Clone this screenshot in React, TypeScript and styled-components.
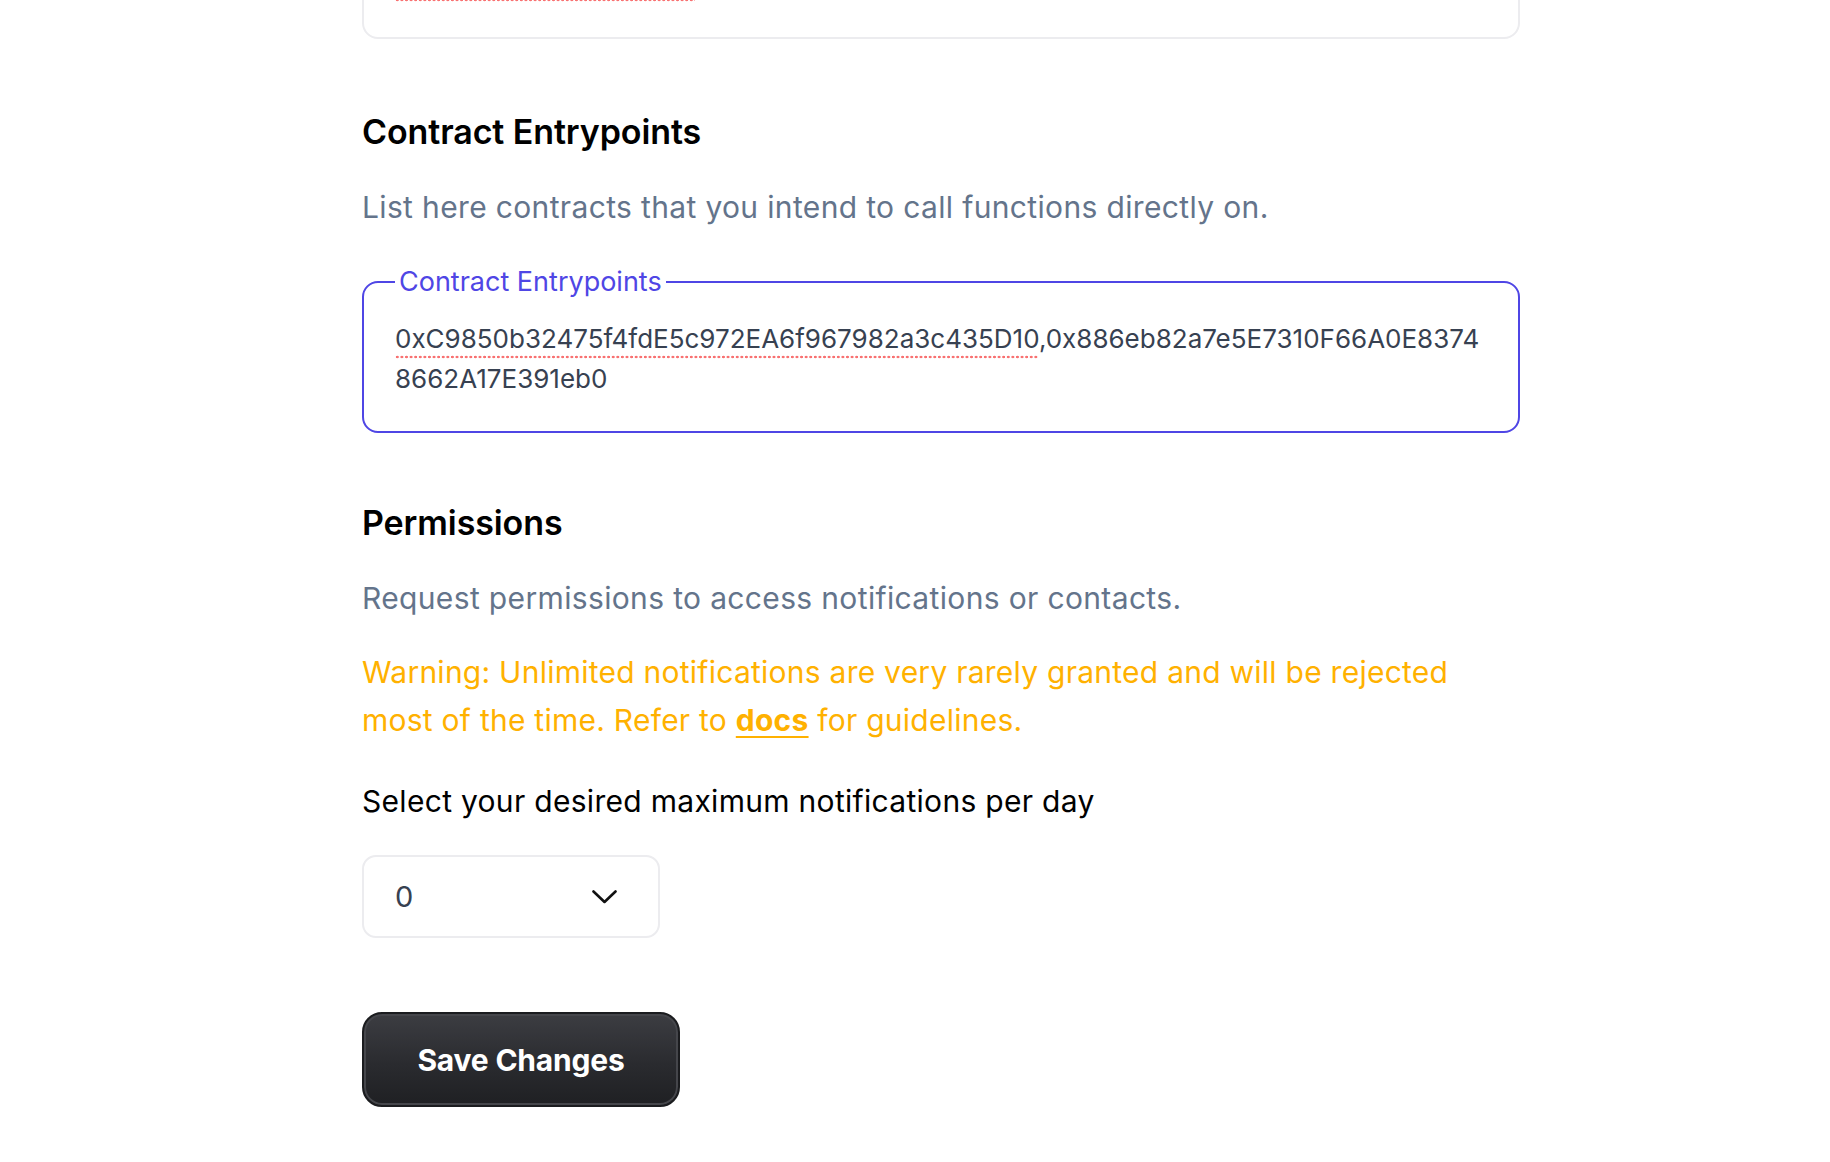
import React from "react";
import styled, { createGlobalStyle } from "styled-components";

const Global = createGlobalStyle`
  html, body { margin: 0; padding: 0; background: #ffffff; }
  body { font-family: Inter, "Noto Sans", "Liberation Sans", sans-serif; overflow: hidden; }
  * { box-sizing: border-box; }
`;

const Page = styled.main`
  width: 1830px;
  height: 1162px;
  overflow: hidden;
  padding: 0 0 0 362px;
`;

const Column = styled.div`
  width: 1158px;
  display: flex;
  flex-direction: column;
  align-items: flex-start;
`;

const PrevBox = styled.div`
  width: 100%;
  margin-top: -61px;
  height: 100px;
  border: 2px solid #ececef;
  border-radius: 16px;
  padding: 0 31px;
`;

const dots = `
  background-image: radial-gradient(circle, #f87171 1.1px, transparent 1.6px);
  background-size: 4.6px 4px;
  background-repeat: repeat-x;
`;

const SpellMark = styled.span`
  display: block;
  margin-top: 57px;
  width: 300px;
  height: 4px;
  ${dots}
  background-position: 0 0;
`;

const Misspelled = styled.span`
  ${dots}
  background-position: 0 calc(100% - 1px);
  padding-bottom: 6px;
`;

const SectionTitle = styled.h2<{ $top: number }>`
  margin: ${(p) => p.$top}px 0 0;
  font-size: 34px;
  line-height: 40px;
  font-weight: 600;
  letter-spacing: -0.1px;
  color: #000;
`;

const Description = styled.p`
  margin: 35px 0 0;
  font-size: 30px;
  line-height: 40px;
  letter-spacing: 0.35px;
  color: #64748b;
`;

const Field = styled.fieldset`
  margin: 40px 0 0;
  width: 100%;
  border: 2px solid #4f46e5;
  border-radius: 16px;
  padding: 22px 28px 32px 31px;
  min-width: 0;
`;

const Legend = styled.legend`
  padding: 0 4px;
  font-size: 27px;
  line-height: 30px;
  color: #4f46e5;
`;

const FieldValue = styled.div`
  font-size: 26px;
  line-height: 40px;
  color: #374151;
  word-break: break-all;
`;

const Warning = styled.p`
  margin: 30px 0 0;
  font-size: 30px;
  line-height: 48px;
  letter-spacing: 0.25px;
  color: #ffb100;
  width: 1120px;
`;

const DocsLink = styled.a`
  color: #ffb100;
  font-weight: 700;
  text-decoration: underline;
  text-decoration-thickness: 2px;
  text-underline-offset: 5px;
`;

const SelectLabel = styled.p`
  margin: 37px 0 0;
  font-size: 30px;
  line-height: 40px;
  letter-spacing: 0.3px;
  color: #000;
`;

const SelectBox = styled.div`
  margin-top: 34px;
  width: 298px;
  height: 83px;
  border: 2px solid #ececef;
  border-radius: 14px;
  display: flex;
  align-items: center;
  justify-content: space-between;
  padding: 0 41px 0 31px;
  font-size: 29px;
  color: #374151;
`;

const SaveButton = styled.button`
  margin-top: 74px;
  width: 318px;
  height: 95px;
  border-radius: 20px;
  border: 2px solid #1b1c1f;
  background: linear-gradient(180deg, #3c3d42 0%, #2a2b2f 55%, #1f2023 100%);
  box-shadow: inset 0 0 0 2px #45464b;
  color: #ffffff;
  font-family: Inter, "Noto Sans", sans-serif;
  font-size: 30px;
  font-weight: 700;
  letter-spacing: -0.2px;
  cursor: pointer;
`;

const Chevron = () => (
  <svg width="25" height="14" viewBox="0 0 25 14" fill="none">
    <path d="M1.5 1.5 L12.5 12 L23.5 1.5" stroke="#111" strokeWidth="2.6" strokeLinecap="round" strokeLinejoin="round" />
  </svg>
);

export default function App() {
  return (
    <Page>
      <Global />
      <Column>
        <PrevBox>
          <SpellMark />
        </PrevBox>

        <SectionTitle $top={73}>Contract Entrypoints</SectionTitle>
        <Description>List here contracts that you intend to call functions directly on.</Description>

        <Field>
          <Legend>Contract Entrypoints</Legend>
          <FieldValue>
            <Misspelled>0xC9850b32475f4fdE5c972EA6f967982a3c435D10</Misspelled>
            ,0x886eb82a7e5E7310F66A0E83748662A17E391eb0
          </FieldValue>
        </Field>

        <SectionTitle $top={70}>Permissions</SectionTitle>
        <Description>Request permissions to access notifications or contacts.</Description>

        <Warning>
          Warning: Unlimited notifications are very rarely granted and will be rejected most of the time. Refer to{" "}
          <DocsLink href="#">docs</DocsLink> for guidelines.
        </Warning>

        <SelectLabel>Select your desired maximum notifications per day</SelectLabel>

        <SelectBox>
          <span>0</span>
          <Chevron />
        </SelectBox>

        <SaveButton>Save Changes</SaveButton>
      </Column>
    </Page>
  );
}
